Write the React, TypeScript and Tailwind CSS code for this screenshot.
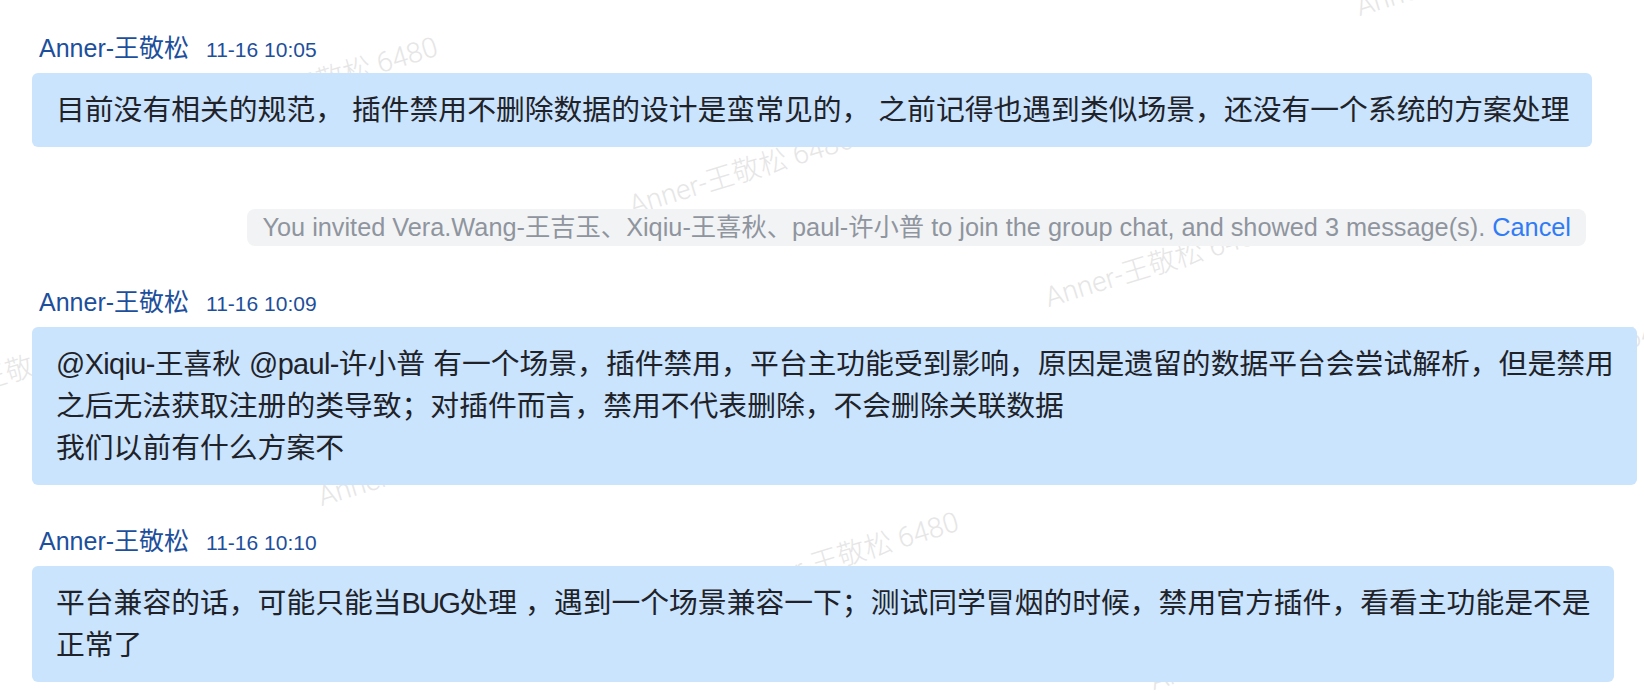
import React from "react";

const WM = "Anner-王敬松 6480";

function Watermarks() {
  const items: React.ReactNode[] = [];
  const ax = 634, ay = 220, ux = 416, uy = 92, vx = 105, vy = 383;
  for (let i = -5; i <= 5; i++) {
    for (let j = -3; j <= 3; j++) {
      const x = ax + i * ux + j * vx;
      const y = ay + i * uy + j * vy;
      if (x < -320 || x > 1700 || y < -60 || y > 820) continue;
      items.push(
        <span
          key={`${i}_${j}`}
          className="absolute whitespace-nowrap text-[28px] leading-[28px] font-light text-[#e6e6e6] origin-bottom-left rotate-[-17deg] font-[family-name:Roboto,'Noto_Sans_CJK_SC',sans-serif]"
          style={{ left: x, top: y - 28 }}
        >
          {WM}
        </span>
      );
    }
  }
  return <div className="pointer-events-none absolute inset-0">{items}</div>;
}

function NameRow({ time, className = "" }: { time: string; className?: string }) {
  return (
    <div className={`ml-[7px] flex h-8 items-baseline leading-8 text-[#1d4f9c] ${className}`}>
      <span className="text-[25px]">Anner-王敬松</span>
      <span className="ml-[17px] text-[21px]">{time}</span>
    </div>
  );
}

function Bubble({ children }: { children: React.ReactNode }) {
  return (
    <div className="mt-[9px] w-fit whitespace-nowrap rounded-[6px] bg-[#cae4fd] py-4 pl-6 pr-[23px] text-[28.8px] leading-[42px] text-[#1f2329]">
      {children}
    </div>
  );
}

export default function App() {
  return (
    <div className="relative h-[694px] w-full overflow-hidden bg-white font-[family-name:'Liberation_Sans','Noto_Sans_CJK_SC',sans-serif]">
      <Watermarks />
      <div className="relative flex w-full flex-col items-start pl-[32px] pt-[32px]">
        <NameRow time="11-16 10:05" />
        <Bubble>
          目前没有相关的规范， 插件禁用不删除数据的设计是蛮常见的， 之前记得也遇到类似场景，还没有一个系统的方案处理
        </Bubble>

        <div className="mr-[58px] mt-[62px] self-end whitespace-nowrap rounded-[8px] bg-[#f2f3f5] px-[15px] text-[25.3px] leading-[37px] text-[#8f959e]">
          You invited Vera.Wang-王吉玉、Xiqiu-王喜秋、paul-许小普 to join the group chat, and showed 3 message(s).{" "}
          <span className="text-[#2f7cf6]">Cancel</span>
        </div>

        <NameRow time="11-16 10:09" className="mt-[40px]" />
        <Bubble>
          <span className="tracking-[-0.6px]">@Xiqiu-</span>王喜秋 <span className="tracking-[-0.6px]">@paul-</span>许小普 有一个场景，插件禁用，平台主功能受到影响，原因是遗留的数据平台会尝试解析，但是禁用
          <br />
          之后无法获取注册的类导致；对插件而言，禁用不代表删除，不会删除关联数据
          <br />
          我们以前有什么方案不
        </Bubble>

        <NameRow time="11-16 10:10" className="mt-[40px]" />
        <Bubble>
          平台兼容的话，可能只能当<span className="tracking-[-1.5px]">BUG</span>处理 ，遇到一个场景兼容一下；测试同学冒烟的时候，禁用官方插件，看看主功能是不是
          <br />
          正常了
        </Bubble>
      </div>
    </div>
  );
}
